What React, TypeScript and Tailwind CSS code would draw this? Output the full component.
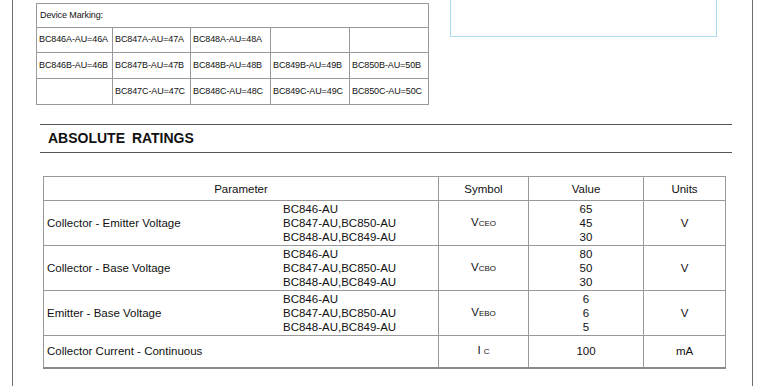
import React from "react";

const markings: string[][] = [
    ["BC846A-AU=46A", "BC847A-AU=47A", "BC848A-AU=48A", "", ""],
    ["BC846B-AU=46B", "BC847B-AU=47B", "BC848B-AU=48B", "BC849B-AU=49B", "BC850B-AU=50B"],
    ["", "BC847C-AU=47C", "BC848C-AU=48C", "BC849C-AU=49C", "BC850C-AU=50C"],
];

const markWidths = ["w-[76px]", "w-[78px]", "w-[80px]", "w-[79px]", "w-[79px]"];

interface Rating {
    name: string;
    devices?: string[];
    sym: string;
    sub: string;
    values: string[];
    unit: string;
}

const devices = ["BC846-AU", "BC847-AU,BC850-AU", "BC848-AU,BC849-AU"];

const ratings: Rating[] = [
    { name: "Collector - Emitter Voltage", devices, sym: "V", sub: "CEO", values: ["65", "45", "30"], unit: "V" },
    { name: "Collector - Base Voltage", devices, sym: "V", sub: "CBO", values: ["80", "50", "30"], unit: "V" },
    { name: "Emitter - Base Voltage", devices, sym: "V", sub: "EBO", values: ["6", "6", "5"], unit: "V" },
    { name: "Collector Current - Continuous", sym: "I ", sub: "C", values: ["100"], unit: "mA" },
];

const cell = "border border-[#999] p-0";

const DeviceMarking: React.FC = () => (
    <table className="mt-[3px] ml-[23px] border-collapse border border-[#8f8f8f] text-[9px] text-[#111] tracking-[-0.1px]">
        <tbody>
            <tr className="h-[24px]">
                <td colSpan={5} className={`${cell} pl-[3px]`}>Device Marking:</td>
            </tr>
            {markings.map((row, i) => (
                <tr key={i} className={i === 0 ? "h-[25px]" : "h-[26px]"}>
                    {row.map((m, j) => (
                        <td key={j} className={`${cell} ${markWidths[j]} pl-[2px] whitespace-nowrap`}>
                            {m}
                        </td>
                    ))}
                </tr>
            ))}
        </tbody>
    </table>
);

const RatingsTable: React.FC = () => (
    <table className="ml-[30px] mt-[23px] border-collapse border border-[#8a8a8a] border-b-2 text-[11.5px] leading-[14px] text-[#111]">
        <tbody>
            <tr className="h-[24px] text-center">
                <td className={`${cell} w-[395px]`}>Parameter</td>
                <td className={`${cell} w-[90px]`}>Symbol</td>
                <td className={`${cell} w-[115px]`}>Value</td>
                <td className={`${cell} w-[82px]`}>Units</td>
            </tr>
            {ratings.map((r) => (
                <tr key={r.name} className={r.devices ? "h-[45px]" : "h-[32px]"}>
                    <td className={cell}>
                        <div className="flex items-center">
                            <div className="w-[239px] pl-[3px]">{r.name}</div>
                            {r.devices && (
                                <div className="flex flex-col">
                                    {r.devices.map((d) => (
                                        <span key={d}>{d}</span>
                                    ))}
                                </div>
                            )}
                        </div>
                    </td>
                    <td className={`${cell} text-center`}>
                        <span className="whitespace-pre">{r.sym}</span>
                        <span className="text-[8px]">{r.sub}</span>
                    </td>
                    <td className={`${cell} text-center`}>
                        <div className="flex flex-col">
                            {r.values.map((v, i) => (
                                <span key={i}>{v}</span>
                            ))}
                        </div>
                    </td>
                    <td className={`${cell} text-center`}>{r.unit}</td>
                </tr>
            ))}
        </tbody>
    </table>
);

export default function App() {
    return (
        <div className="w-[775px] h-[386px] bg-white overflow-hidden font-['Liberation_Sans',Arial,sans-serif]">
            <div className="ml-[12px] w-[741px] h-full border-x border-[#6f6f6f]">
                <div className="flex items-start">
                    <DeviceMarking />
                    <div className="ml-[21px] w-[267px] h-[37px] border-x border-b border-[#a9daf0]" />
                </div>
                <div className="ml-[27px] mt-[19px] w-[692px] h-[29px] border-y border-[#555] flex items-center pl-[8px]">
                    <h2 className="text-[14px] font-bold text-[#111] [word-spacing:3px]">ABSOLUTE RATINGS</h2>
                </div>
                <RatingsTable />
            </div>
        </div>
    );
}
